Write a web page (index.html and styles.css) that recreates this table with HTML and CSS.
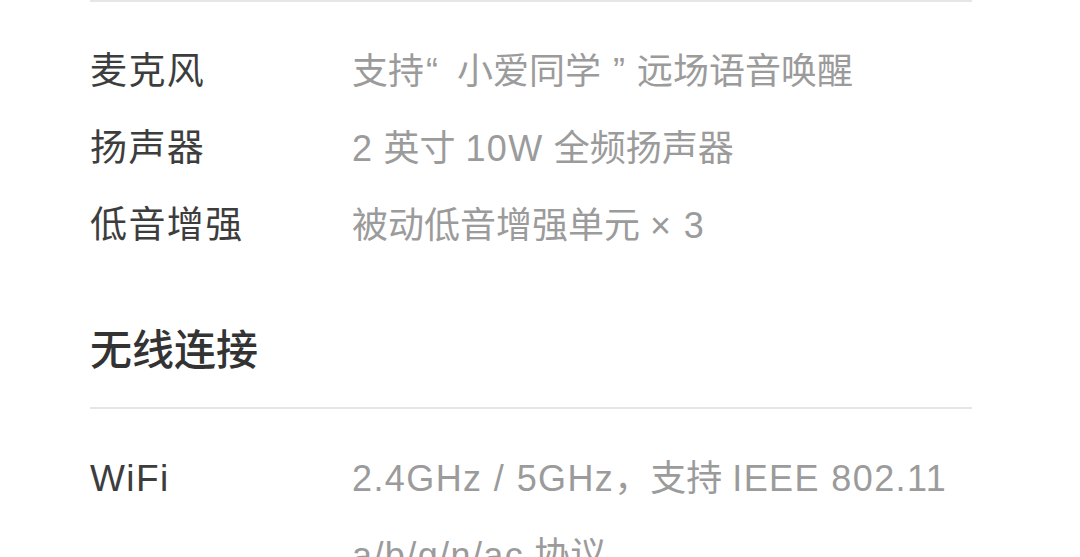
FILE: index.html
```html
<!DOCTYPE html>
<html lang="zh-CN">
<head>
<meta charset="utf-8">
<title>规格参数</title>
<link rel="stylesheet" href="styles.css">
</head>
<body>
<div class="spec">
  <dl class="rows">
    <div class="row"><dt class="label">麦克风</dt><dd class="value">支持<span class="q-open">“</span> 小爱同学 <span class="q-close">”</span>远场语音唤醒</dd></div>
    <div class="row"><dt class="label">扬声器</dt><dd class="value"><span class="latin">2</span> 英寸 <span class="latin">10W</span> 全频扬声器</dd></div>
    <div class="row"><dt class="label">低音增强</dt><dd class="value">被动低音增强单元 <span class="latin">× 3</span></dd></div>
  </dl>
  <h2 class="section-title">无线连接</h2>
  <dl class="rows">
    <div class="row"><dt class="label">WiFi</dt><dd class="value"><span class="latin">2.4GHz / 5GHz</span>，支持 <span class="latin">IEEE 802.11 a/b/g/n/ac</span> 协议</dd></div>
  </dl>
</div>
</body>
</html>
```

FILE: styles.css
```css
html, body {
  margin: 0;
  padding: 0;
  background: #ffffff;
}

body {
  font-family: "Liberation Sans", "Noto Sans CJK SC", sans-serif;
  overflow: hidden;
}

.spec {
  width: 882px;
  margin-left: 90px;
}

.rows {
  margin: 0;
  padding-top: 31px;
  border-top: 2px solid #e6e6e6;
}

.row {
  display: flex;
  align-items: baseline;
}

.label {
  flex: 0 0 262px;
  margin: 0;
  font-size: 37px;
  letter-spacing: 1.4px;
  line-height: 77px;
  color: #3d3d3d;
}

.value {
  flex: 1;
  margin: 0;
  font-size: 36px;
  line-height: 77px;
  color: #9b9b9b;
}

.latin {
  letter-spacing: 1.4px;
}

.q-open {
  margin: 0 9px 0 2px;
}

.q-close {
  margin: 0 12px 0 2px;
}

.section-title {
  margin: 57px 0 26px;
  font-size: 42px;
  line-height: 60px;
  font-weight: 500;
  color: #333333;
}
```
